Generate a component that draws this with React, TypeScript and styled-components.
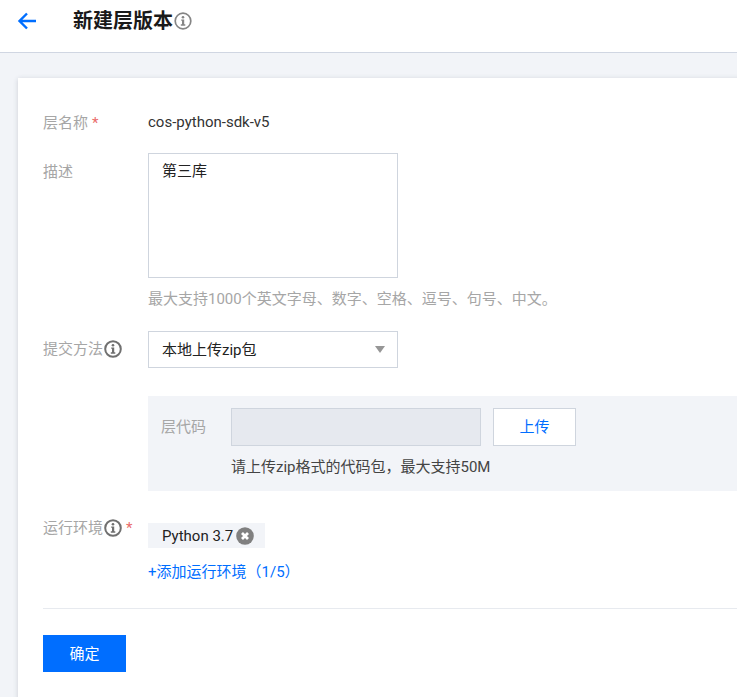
import styled, { createGlobalStyle } from "styled-components";
import { FC, ReactNode } from "react";

const GlobalStyle = createGlobalStyle`
  html, body {
    margin: 0;
    height: 100%;
    overflow: hidden;
    background: #f2f4f8;
    font-family: Roboto, "Noto Sans CJK SC", sans-serif;
    font-size: 15px;
    color: #222;
  }
`;

const Page = styled.div`
  width: 737px;
  height: 697px;
  overflow: hidden;
`;

const Header = styled.header`
  display: flex;
  align-items: flex-start;
  height: 52px;
  background: #fff;
  border-bottom: 1px solid #d0d6e2;
`;

const BackButton = styled.span`
  display: flex;
  margin: 11px 0 0 17px;
  width: 20px;
  height: 20px;
`;

const Title = styled.h1`
  display: flex;
  align-items: center;
  margin: 8px 0 0 36px;
  font-size: 20px;
  line-height: 26px;
  font-weight: 700;
  color: #1a1a1a;
`;

const Card = styled.main`
  margin: 25px 0 0 18px;
  width: 900px;
  height: 640px;
  padding: 29px 0 0 25px;
  box-sizing: border-box;
  background: #fff;
  box-shadow: 0 1px 5px rgba(54, 58, 80, 0.2);
`;

const Row = styled.div<{ $mb: number; $mt?: number }>`
  display: flex;
  margin-top: ${(p) => p.$mt ?? 0}px;
  margin-bottom: ${(p) => p.$mb}px;
`;

const Label = styled.div<{ $top: number }>`
  display: flex;
  align-items: center;
  flex: none;
  width: 105px;
  height: 30px;
  margin-top: ${(p) => p.$top}px;
  color: #a6a6a6;
  line-height: 30px;
`;

const Required = styled.span`
  margin-left: 4px;
  color: #ea6a6a;
`;

const Value = styled.div`
  line-height: 30px;
  color: #333;
`;

const TextArea = styled.div`
  box-sizing: border-box;
  width: 250px;
  height: 125px;
  padding: 6px 13px;
  border: 1px solid #cfd5de;
  line-height: 22px;
  color: #222;
`;

const Hint = styled.div`
  margin-top: 10px;
  color: #a6a6a6;
  line-height: 22px;
`;

const Select = styled.div`
  display: flex;
  align-items: center;
  justify-content: space-between;
  box-sizing: border-box;
  width: 250px;
  height: 37px;
  padding: 0 12px 2px 13px;
  border: 1px solid #cfd5de;
  color: #222;
`;

const Caret = styled.span`
  width: 0;
  height: 0;
  margin-top: 2px;
  border-left: 5.5px solid transparent;
  border-right: 5.5px solid transparent;
  border-top: 7px solid #969696;
`;

const UploadPanel = styled.div`
  box-sizing: border-box;
  width: 750px;
  height: 95px;
  margin-left: 105px;
  padding: 12px 13px 0;
  background: #f2f4f8;
`;

const UploadRow = styled.div`
  display: flex;
  align-items: center;
`;

const UploadLabel = styled.span`
  width: 70px;
  padding-bottom: 3px;
  color: #a6a6a6;
`;

const FileInput = styled.div`
  box-sizing: border-box;
  width: 250px;
  height: 38px;
  background: #e6e9ef;
  border: 1px solid #cfd5de;
`;

const UploadButton = styled.button`
  box-sizing: border-box;
  width: 83px;
  height: 38px;
  margin-left: 12px;
  padding: 0 0 3px;
  background: #fff;
  border: 1px solid #cfd5de;
  border-radius: 0;
  color: #006eff;
  font: inherit;
`;

const UploadHelp = styled.div`
  margin: 10px 0 0 70px;
  line-height: 22px;
  color: #444;
`;

const Stack = styled.div`
  display: flex;
  flex-direction: column;
  align-items: flex-start;
`;

const Chip = styled.div`
  display: flex;
  align-items: center;
  box-sizing: border-box;
  width: 117px;
  height: 25px;
  padding-left: 14px;
  background: #f2f4f8;
  color: #222;
`;

const CloseIcon = styled.svg`
  margin-left: 3px;
  flex: none;
`;

const AddLink = styled.a`
  margin-top: 13px;
  line-height: 22px;
  color: #006eff;
`;

const Divider = styled.hr`
  margin: 0;
  border: 0;
  border-top: 1px solid #e7eaef;
`;

const Submit = styled.button`
  display: block;
  width: 83px;
  height: 37px;
  margin-top: 26px;
  padding: 0 0 3px;
  border: 0;
  border-radius: 0;
  background: #006eff;
  color: #fff;
  font: inherit;
`;

const InfoIcon: FC<{ size: number; color?: string; weight?: number }> = ({
  size,
  color = "#707070",
  weight = 2,
}) => (
  <svg
    width={size}
    height={size}
    viewBox="0 0 18 18"
    style={{ marginLeft: 1, flex: "none" }}
  >
    <circle cx="9" cy="9" r="7.8" fill="none" stroke={color} strokeWidth={weight} />
    <circle cx="9" cy="5.2" r="1.3" fill={color} />
    <path d="M7.2 7.4H10.2V12.3H11.3V13.7H6.8V12.3H8V8.8H7.2Z" fill={color} />
  </svg>
);

const FormRow: FC<{
  mb: number;
  top?: number;
  label: ReactNode;
  children: ReactNode;
}> = ({ mb, top = 0, label, children }) => (
  <Row $mb={mb}>
    <Label $top={top}>{label}</Label>
    {children}
  </Row>
);

export default function App() {
  return (
    <Page>
      <GlobalStyle />
      <Header>
        <BackButton>
          <svg width="20" height="20" viewBox="0 0 20 20" fill="none">
            <path
              d="M19 10H3M10 2.5L2.5 10l7.5 7.5"
              stroke="#006eff"
              strokeWidth="2.4"
            />
          </svg>
        </BackButton>
        <Title>
          新建层版本
          <InfoIcon size={18} color="#858585" weight={1.7} />
        </Title>
      </Header>
      <Card>
        <FormRow
          mb={15}
          top={1}
          label={
            <>
              层名称<Required>*</Required>
            </>
          }
        >
          <Value>cos-python-sdk-v5</Value>
        </FormRow>
        <FormRow mb={21} top={4} label="描述">
          <Stack>
            <TextArea>第三库</TextArea>
            <Hint>最大支持1000个英文字母、数字、空格、逗号、句号、中文。</Hint>
          </Stack>
        </FormRow>
        <FormRow
          mb={28}
          top={3}
          label={
            <>
              提交方法
              <InfoIcon size={18} />
            </>
          }
        >
          <Select>
            本地上传zip包
            <Caret />
          </Select>
        </FormRow>
        <UploadPanel>
          <UploadRow>
            <UploadLabel>层代码</UploadLabel>
            <FileInput />
            <UploadButton>上传</UploadButton>
          </UploadRow>
          <UploadHelp>请上传zip格式的代码包，最大支持50M</UploadHelp>
        </UploadPanel>
        <Row $mt={32} $mb={25}>
          <Label $top={-10}>
            运行环境
            <InfoIcon size={18} />
            <Required>*</Required>
          </Label>
          <Stack>
            <Chip>
              Python 3.7
              <CloseIcon width="18" height="18" viewBox="0 0 18 18">
                <circle cx="9" cy="9" r="8.8" fill="#808080" />
                <path
                  d="M6 6l6 6M12 6l-6 6"
                  stroke="#fff"
                  strokeWidth="2.8"
                />
              </CloseIcon>
            </Chip>
            <AddLink>+添加运行环境（1/5）</AddLink>
          </Stack>
        </Row>
        <Divider />
        <Submit>确定</Submit>
      </Card>
    </Page>
  );
}
